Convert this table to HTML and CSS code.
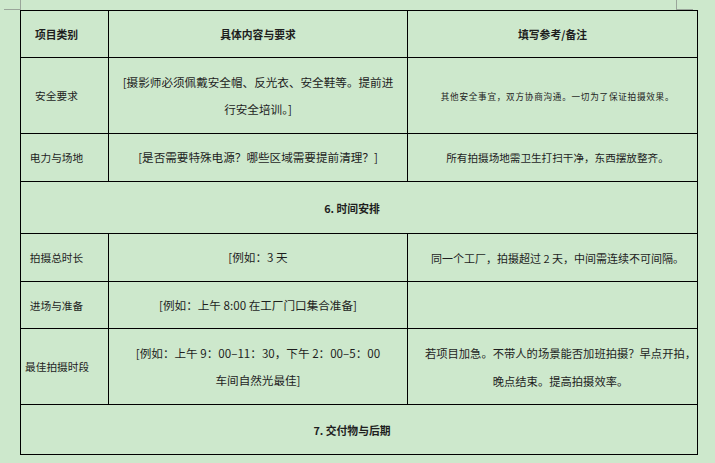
FILE: index.html
```html
<!DOCTYPE html>
<html lang="zh-CN">
<head>
<meta charset="utf-8">
<title>拍摄需求表</title>
<link rel="stylesheet" href="styles.css">
</head>
<body>
<div class="page">
  <span class="mark mark-tl"></span>
  <span class="mark mark-tr"></span>
  <table class="sheet">
    <colgroup>
      <col class="c1"><col class="c2"><col class="c3">
    </colgroup>
    <tr class="r-head">
      <th class="cat">项目类别</th>
      <th class="main">具体内容与要求</th>
      <th class="head-note">填写参考/备注</th>
    </tr>
    <tr class="r-tall">
      <td class="cat">安全要求</td>
      <td class="main">[摄影师必须佩戴安全帽、反光衣、安全鞋等。提前进<br>行安全培训。]</td>
      <td class="note small">其他安全事宜，双方协商沟通。一切为了保证拍摄效果。</td>
    </tr>
    <tr class="r-48">
      <td class="cat">电力与场地</td>
      <td class="main">[是否需要特殊电源？哪些区域需要提前清理？]</td>
      <td class="note narrow">所有拍摄场地需卫生打扫干净，东西摆放整齐。</td>
    </tr>
    <tr class="r-sec1">
      <td class="section" colspan="3">6. 时间安排</td>
    </tr>
    <tr class="r-48">
      <td class="cat">拍摄总时长</td>
      <td class="main">[例如：3 天</td>
      <td class="note mid">同一个工厂，拍摄超过 2 天，中间需连续不可间隔。</td>
    </tr>
    <tr class="r-47">
      <td class="cat">进场与准备</td>
      <td class="main">[例如：上午 8:00 在工厂门口集合准备]</td>
      <td class="note"></td>
    </tr>
    <tr class="r-tall2">
      <td class="cat">最佳拍摄时段</td>
      <td class="main">[例如：上午 9：00–11：30，下午 2：00–5：00<br>车间自然光最佳]</td>
      <td class="note wide">若项目加急。不带人的场景能否加班拍摄？早点开拍，<br>晚点结束。提高拍摄效率。</td>
    </tr>
    <tr class="r-sec2">
      <td class="section" colspan="3">7. 交付物与后期</td>
    </tr>
  </table>
</div>
</body>
</html>
```

FILE: styles.css
```css
html, body {
  margin: 0;
  padding: 0;
  background: #cde8cc;
}

body {
  font-family: "Noto Sans CJK SC", "Noto Sans", sans-serif;
  color: #1e1e1e;
}

.page {
  position: relative;
  width: 715px;
  height: 463px;
  padding: 10px 0 0 20px;
  box-sizing: border-box;
}

.mark {
  position: absolute;
  border-color: #9aa59a;
  border-style: solid;
  border-width: 0;
}

.mark-tl {
  left: 4px;
  top: 0;
  width: 16px;
  height: 9px;
  border-right-width: 1px;
  border-bottom-width: 1px;
}

.mark-tr {
  left: 676px;
  top: 0;
  width: 16px;
  height: 9px;
  border-left-width: 1px;
  border-bottom-width: 1px;
}

.sheet {
  border-collapse: collapse;
  table-layout: fixed;
  width: 677px;
}

.c1 { width: 88px; }
.c2 { width: 299px; }
.c3 { width: 290px; }

.sheet th,
.sheet td {
  border: 1px solid #000;
  padding: 0;
  vertical-align: middle;
  text-align: center;
  white-space: nowrap;
  overflow: visible;
}

.sheet th {
  font-weight: 700;
  font-size: 10.8px;
}

.r-head { height: 47px; }
.r-tall { height: 76px; }
.r-48 { height: 48px; }
.r-47 { height: 47px; }
.r-sec1 { height: 52px; }
.r-tall2 { height: 76px; }
.r-sec2 { height: 50px; }

.cat {
  font-size: 10.7px;
  padding: 0 20px 0 4px !important;
}

.sheet th.cat {
  font-size: 10.8px;
}

.main {
  font-size: 11.6px;
  line-height: 27px;
}

.sheet th.main,
.sheet th.head-note {
  font-size: 10.8px;
  line-height: normal;
}

.note {
  font-size: 11.3px;
  line-height: 28px;
  padding: 0 0 0 10px !important;
}

.note.small {
  font-size: 8.6px;
  letter-spacing: 0.75px;
}

.note.narrow {
  font-size: 10.6px;
}

.note.mid {
  font-size: 11px;
}

.note.wide {
  padding: 0 0 0 16px !important;
}

.section {
  font-weight: 700;
  font-size: 10.8px;
  padding: 0 14px 0 0 !important;
}
```
